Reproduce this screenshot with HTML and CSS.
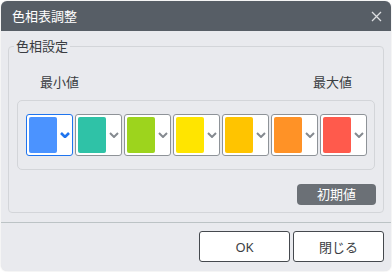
FILE: index.html
```html
<!DOCTYPE html>
<html lang="ja">
<head>
    <meta charset="UTF-8">
    <meta name="viewport" content="width=device-width, initial-scale=1.0">
    <title>色相表調整</title>
    <link rel="stylesheet" href="styles.css">
</head>
<body>
    <div class="dialog">
        <div class="titlebar">
            <span class="title">色相表調整</span>
            <button class="close" title="閉じる">
                <svg width="11" height="11" viewBox="0 0 11 11"><path d="M1 1 L10 10 M10 1 L1 10" stroke="#dcdee1" stroke-width="1.3" fill="none"/></svg>
            </button>
        </div>

        <div class="content">
            <fieldset class="group">
                <legend>色相設定</legend>
                <div class="range-labels">
                    <span>最小値</span>
                    <span>最大値</span>
                </div>
                <div class="swatch-box">
                    <div class="swatch selected"><span class="chip" style="background:#4b93ff"></span><svg class="chev" viewBox="0 0 10 6"><path d="M1 1 L5 5 L9 1" /></svg></div>
                    <div class="swatch"><span class="chip" style="background:#2fc2a7"></span><svg class="chev" viewBox="0 0 10 6"><path d="M1 1 L5 5 L9 1" /></svg></div>
                    <div class="swatch"><span class="chip" style="background:#9dd41d"></span><svg class="chev" viewBox="0 0 10 6"><path d="M1 1 L5 5 L9 1" /></svg></div>
                    <div class="swatch"><span class="chip" style="background:#ffe500"></span><svg class="chev" viewBox="0 0 10 6"><path d="M1 1 L5 5 L9 1" /></svg></div>
                    <div class="swatch"><span class="chip" style="background:#ffc400"></span><svg class="chev" viewBox="0 0 10 6"><path d="M1 1 L5 5 L9 1" /></svg></div>
                    <div class="swatch"><span class="chip" style="background:#ff9226"></span><svg class="chev" viewBox="0 0 10 6"><path d="M1 1 L5 5 L9 1" /></svg></div>
                    <div class="swatch"><span class="chip" style="background:#ff5a4c"></span><svg class="chev" viewBox="0 0 10 6"><path d="M1 1 L5 5 L9 1" /></svg></div>
                </div>
                <div class="reset-row">
                    <button class="reset">初期値</button>
                </div>
            </fieldset>
        </div>

        <div class="footer">
            <button class="btn">OK</button>
            <button class="btn">閉じる</button>
        </div>
    </div>
</body>
</html>
```

FILE: styles.css
```css
body {
    margin: 0;
    background: #ffffff;
    font-family: "Noto Sans", "Noto Sans CJK JP", sans-serif;
    font-size: 13px;
    color: #3a3d42;
}
button {
    font-family: inherit;
    font-size: 13px;
    cursor: pointer;
}
.dialog {
    margin: 1px;
    width: 390px;
    height: 270px;
    border-radius: 6px;
    background: #e9eaee;
    overflow: hidden;
    box-shadow: 0 0 2px rgba(0,0,0,0.15);
}
.titlebar {
    height: 30px;
    display: flex;
    align-items: center;
    justify-content: space-between;
    padding: 0 8px 0 11px;
    background: #575e66;
}
.title {
    color: #ffffff;
    font-size: 13px;
    line-height: 18px;
}
.close {
    background: none;
    border: none;
    padding: 0;
    margin: 0;
    width: 14px;
    height: 14px;
    display: flex;
    align-items: center;
    justify-content: center;
}
.content {
    padding: 6px 7px 0 7px;
}
.group {
    margin: 0;
    padding: 0 8px 7px 8px;
    border: 1px solid #d3d5d9;
    border-radius: 4px;
    min-width: 0;
}
.group legend {
    margin-left: -3px;
    padding: 0 2px;
    line-height: 18px;
    color: #3a3d42;
}
.range-labels {
    display: flex;
    justify-content: space-between;
    padding: 0 23px 0 23px;
    margin-top: 18px;
    line-height: 18px;
}
.swatch-box {
    margin-top: 9px;
    border: 1px solid #d3d5d9;
    border-radius: 5px;
    padding: 13px 8px;
    display: flex;
    gap: 2px;
}
.swatch {
    width: 47px;
    height: 42px;
    box-sizing: border-box;
    border: 1px solid #8e9398;
    border-radius: 3px;
    background: #ffffff;
    padding: 2px;
    display: flex;
    align-items: center;
}
.swatch.selected {
    border-color: #1f74ee;
}
.chip {
    width: 28px;
    height: 36px;
    border-radius: 2px;
}
.chev {
    width: 10px;
    height: 6px;
    margin-left: 3px;
    fill: none;
    stroke: #858a90;
    stroke-width: 2;
}
.selected .chev {
    stroke: #1f74ee;
    stroke-width: 2.6;
}
.reset-row {
    display: flex;
    justify-content: flex-end;
    margin-top: 14px;
    margin-right: -1px;
}
.reset {
    width: 79px;
    height: 21px;
    padding: 0;
    border: none;
    border-radius: 4px;
    background: #6b7076;
    color: #ffffff;
    line-height: 21px;
}
.footer {
    margin-top: 9px;
    border-top: 1px solid #bcc3c5;
    padding: 8px 7px 0 7px;
    display: flex;
    justify-content: flex-end;
    gap: 3px;
}
.btn {
    width: 91px;
    height: 31px;
    padding: 0;
    border: 1px solid #45494e;
    border-radius: 3px;
    background: #ffffff;
    color: #3a3d42;
}
```
